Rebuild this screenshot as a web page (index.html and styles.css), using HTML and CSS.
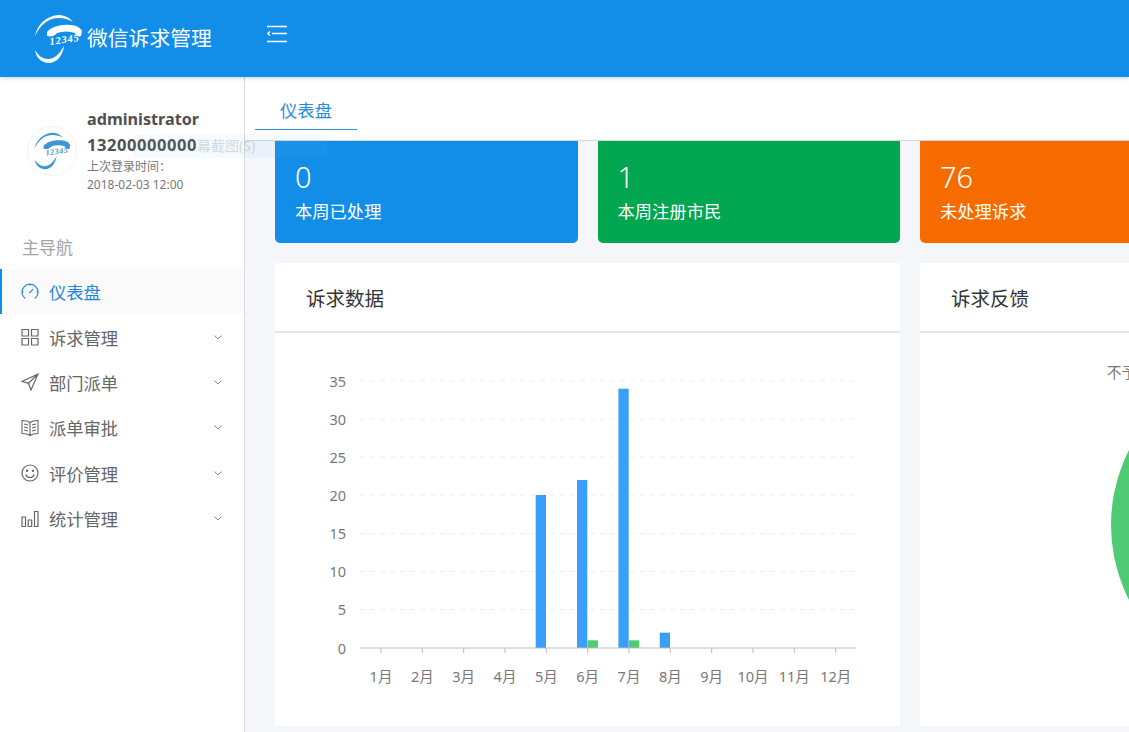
FILE: index.html
```html
<!DOCTYPE html>
<html lang="zh-CN">
<head>
    <meta charset="UTF-8">
    <meta name="viewport" content="width=device-width, initial-scale=1.0">
    <title>微信诉求管理</title>
    <link rel="stylesheet" href="styles.css">
</head>
<body>
    <svg class="defs" width="0" height="0">
        <symbol id="logo" viewBox="0 0 50 50">
            <path fill="currentColor" d="M2 22C4 11 13 2 25 1c6 0 11 2 15 7 -5-3-9-4-14-4C15 4 7 11 2 22z"/>
            <path fill="currentColor" d="M14 18c4-5 14-8 23-7 5 0 10 2 12 6l-1 5c-3 1-5 0-6-3 -6-2-12-2-18 0 -2 3-6 4-10 3z"/>
            <path fill="currentColor" d="M2 36c3 5 7 9 13 9 7 0 12-6 16-13 -1 9-7 17-15 17C9 49 3 44 2 36z"/>
            <text x="17" y="31" class="logo-num" transform="rotate(-8 17 31)">12345</text>
        </symbol>
    </svg>

    <header class="topbar">
        <div class="brand">
            <svg class="brand-logo"><use href="#logo"/></svg>
            <span class="brand-name">微信诉求管理</span>
        </div>
        <svg class="menu-toggle" width="20" height="18" viewBox="0 0 20 18" fill="none" stroke="#fff" stroke-width="1.4">
            <path d="M0 1.5h20M5 8.5h15M0 16.5h20M3 6.5L.8 8.5 3 10.5"/>
        </svg>
    </header>

    <div class="layout">
        <aside class="sidebar">
            <div class="user">
                <div class="avatar"><svg class="avatar-logo"><use href="#logo"/></svg></div>
                <div class="user-info">
                    <div class="user-name">administrator</div>
                    <div class="user-name user-phone">13200000000</div>
                    <div class="user-meta user-meta-first">上次登录时间：</div>
                    <div class="user-meta">2018-02-03 12:00</div>
                </div>
            </div>

            <div class="nav-title">主导航</div>
            <nav class="nav">
                <a class="nav-item active">
                    <svg class="nav-icon" viewBox="0 0 18 18" fill="none" stroke="currentColor" stroke-width="1.2"><path d="M4.2 15.6A8 8 0 1 1 13.8 15.6M1 9h1.5M15.5 9H17M9 1v1.5M8.4 10.2L12 6.2"/></svg>
                    <span>仪表盘</span>
                </a>
                <a class="nav-item">
                    <svg class="nav-icon" viewBox="0 0 18 18" fill="none" stroke="currentColor" stroke-width="1.2"><path d="M1 1.5h6.5V8H1zM10.500 1.500H17V8h-6.500zM1 10.500h6.500V17H1zM10.500 10.500H17V17h-6.500z"/></svg>
                    <span>诉求管理</span>
                    <svg class="nav-arrow" viewBox="0 0 8 5" fill="none" stroke="currentColor"><path d="M.5.500L4 4 7.500.500"/></svg>
                </a>
                <a class="nav-item">
                    <svg class="nav-icon" viewBox="0 0 18 18" fill="none" stroke="currentColor" stroke-width="1.2"><path d="M17 1L1 8.500l6.500 1.800L10 17zM17 1L7.500 10.300"/></svg>
                    <span>部门派单</span>
                    <svg class="nav-arrow" viewBox="0 0 8 5" fill="none" stroke="currentColor"><path d="M.5.500L4 4 7.500.500"/></svg>
                </a>
                <a class="nav-item">
                    <svg class="nav-icon" viewBox="0 0 18 18" fill="none" stroke="currentColor" stroke-width="1.1"><path d="M1 1.500c3 0 6 .5 8 2 2-1.500 5-2 8-2v13c-3 0-6 .5-8 2-2-1.500-5-2-8-2zM9 3.500v13M3 5l4 1M3 8l4 1M3 11l4 1M15 5l-4 1M15 8l-4 1M15 11l-4 1"/></svg>
                    <span>派单审批</span>
                    <svg class="nav-arrow" viewBox="0 0 8 5" fill="none" stroke="currentColor"><path d="M.5.500L4 4 7.500.500"/></svg>
                </a>
                <a class="nav-item">
                    <svg class="nav-icon" viewBox="0 0 18 18" fill="none" stroke="currentColor" stroke-width="1.2"><circle cx="9" cy="9" r="8"/><path d="M4.800 10.500c1 4 7.400 4 8.400 0"/><circle cx="6" cy="6.800" r=".6"/><circle cx="12" cy="6.800" r=".6"/></svg>
                    <span>评价管理</span>
                    <svg class="nav-arrow" viewBox="0 0 8 5" fill="none" stroke="currentColor"><path d="M.5.500L4 4 7.500.500"/></svg>
                </a>
                <a class="nav-item">
                    <svg class="nav-icon" viewBox="0 0 18 18" fill="none" stroke="currentColor" stroke-width="1.2"><path d="M1 7h3.500v9.500H1zM7.200 10h3.500v6.500H7.200zM13.500 1.500H17v15h-3.500z"/></svg>
                    <span>统计管理</span>
                    <svg class="nav-arrow" viewBox="0 0 8 5" fill="none" stroke="currentColor"><path d="M.5.500L4 4 7.500.500"/></svg>
                </a>
            </nav>
        </aside>

        <main class="content">
            <div class="tabs">
                <a class="tab">仪表盘</a>
            </div>

            <div class="dashboard">
                <div class="stat stat-blue">
                    <div class="stat-num">0</div>
                    <div class="stat-label">本周已处理</div>
                </div>
                <div class="stat stat-green">
                    <div class="stat-num">1</div>
                    <div class="stat-label">本周注册市民</div>
                </div>
                <div class="stat stat-orange">
                    <div class="stat-num">76</div>
                    <div class="stat-label">未处理诉求</div>
                </div>

                <section class="panel panel-wide">
                    <h2 class="panel-title">诉求数据</h2>
                    <svg class="chart" width="625" height="393" viewBox="275 333 625 393">
                        <g class="grid">
                            <path d="M360 381H856M360 419H856M360 457H856M360 495H856M360 533.500H856M360 571.500H856M360 609.500H856"/>
                        </g>
                        <g class="y-labels">
                            <text x="346" y="387">35</text>
                            <text x="346" y="425">30</text>
                            <text x="346" y="463">25</text>
                            <text x="346" y="501">20</text>
                            <text x="346" y="539">15</text>
                            <text x="346" y="577">10</text>
                            <text x="346" y="615">5</text>
                            <text x="346" y="654">0</text>
                        </g>
                        <g class="bars-blue">
                            <rect x="535.700" y="495" width="10.300" height="153"/>
                            <rect x="577" y="480" width="10.300" height="168"/>
                            <rect x="618.400" y="388.700" width="10.300" height="259.300"/>
                            <rect x="659.700" y="632.700" width="10.300" height="15.300"/>
                        </g>
                        <g class="bars-green">
                            <rect x="587.600" y="640.300" width="10.300" height="7.700"/>
                            <rect x="629" y="640.300" width="10.300" height="7.700"/>
                        </g>
                        <path class="axis" d="M360 648H856M381 648v5M422.300 648v5M463.700 648v5M505 648v5M546.300 648v5M587.700 648v5M629 648v5M670.300 648v5M711.700 648v5M753 648v5M794.300 648v5M835.700 648v5"/>
                        <g class="x-labels">
                            <text x="381" y="682">1月</text>
                            <text x="422.300" y="682">2月</text>
                            <text x="463.700" y="682">3月</text>
                            <text x="505" y="682">4月</text>
                            <text x="546.300" y="682">5月</text>
                            <text x="587.700" y="682">6月</text>
                            <text x="629" y="682">7月</text>
                            <text x="670.300" y="682">8月</text>
                            <text x="711.700" y="682">9月</text>
                            <text x="753" y="682">10月</text>
                            <text x="794.300" y="682">11月</text>
                            <text x="835.700" y="682">12月</text>
                        </g>
                    </svg>
                </section>

                <section class="panel">
                    <h2 class="panel-title">诉求反馈</h2>
                    <div class="pie-box">
                        <div class="pie-legend">不予受理</div>
                        <div class="pie"></div>
                    </div>
                </section>
            </div>
        </main>
    </div>

    <div class="ghost-tip">幕截图(S)</div>
</body>
</html>
```

FILE: styles.css
```css
* {
	box-sizing: border-box;
}

html, body {
	height: 732px;
	overflow: hidden;
}

body {
	margin: 0;
	background: #f5f6fa;
	font-family: "Noto Sans", "Noto Sans CJK SC", sans-serif;
	color: #555;
}

.defs {
	display: block;
	height: 0;
}

.logo-num {
	font-family: "Liberation Serif", serif;
	font-style: italic;
	font-weight: 700;
	font-size: 10.5px;
	letter-spacing: .8px;
	fill: currentColor;
}

.topbar {
	height: 77px;
	background: #128ee9;
	display: flex;
	align-items: flex-start;
	box-shadow: 0 1px 4px rgba(0, 0, 0, 0.2);
	position: relative;
	z-index: 2;
}

.brand {
	width: 267px;
	padding: 14px 0 0 33px;
	display: flex;
	color: #fff;
}

.brand-logo {
	width: 50px;
	height: 50px;
	flex: none;
}

.brand-name {
	margin: 6px 0 0 4px;
	font-size: 20.8px;
	line-height: 36px;
	white-space: nowrap;
}

.menu-toggle {
	margin-top: 25px;
}

.layout {
	display: flex;
	height: 655px;
}

.sidebar {
	width: 245px;
	flex: none;
	background: #fff;
	border-right: 1px solid #d9d9d9;
}

.user {
	display: flex;
	align-items: center;
	padding: 30px 0 0 27px;
}

.avatar {
	width: 50px;
	height: 50px;
	flex: none;
	border-radius: 50%;
	border: 1px solid #f2f2f2;
	color: #3d97d3;
	padding: 5px;
}

.avatar-logo {
	display: block;
	width: 38px;
	height: 38px;
}

.user-info {
	margin-left: 10px;
}

.user-name {
	font-size: 16.2px;
	font-weight: 700;
	line-height: 25px;
	color: #505050;
}

.user-phone {
	font-size: 16.5px;
	letter-spacing: .55px;
}

.user-meta {
	font-size: 12px;
	line-height: 18px;
	color: #777;
}

.user-meta-first {
	margin-top: 1px;
}

.nav-title {
	margin-top: 41px;
	padding-left: 22px;
	font-size: 17px;
	line-height: 26px;
	color: #a3a3a3;
}

.nav {
	margin-top: 8px;
}

.nav-item {
	height: 45.4px;
	display: flex;
	align-items: center;
	padding-left: 21px;
	font-size: 17.3px;
	color: #666;
	position: relative;
}

.nav-item.active {
	background: #fafafa;
	color: #1f86dc;
}

.nav-item.active::before {
	content: "";
	position: absolute;
	left: 0;
	top: 0;
	bottom: 0;
	width: 2px;
	background: #128ee9;
}

.nav-icon {
	width: 18px;
	height: 18px;
	flex: none;
	margin-right: 10px;
}

.nav-arrow {
	width: 8px;
	height: 5px;
	margin-left: auto;
	margin-right: 22px;
	color: #888;
}

.content {
	flex: 1;
	min-width: 0;
}

.tabs {
	height: 64px;
	background: #fff;
	border-bottom: 1px solid #d8d8d8;
	padding: 10px 0 0 10px;
}

.tab {
	display: block;
	width: 102px;
	height: 43px;
	line-height: 47px;
	text-align: center;
	font-size: 17.3px;
	color: #2a8bd6;
	border-bottom: 1px solid #2f8fdc;
}

.dashboard {
	display: grid;
	grid-template-columns: 302.5px 302.5px 303px;
	gap: 20px;
	padding-left: 30px;
	width: 1000px;
}

.stat {
	height: 102px;
	border-radius: 0 0 5px 5px;
	padding: 17px 20px 0;
	color: #fff;
}

.stat-blue {
	background: #128ee9;
}

.stat-green {
	background: #00a650;
}

.stat-orange {
	background: #f66b00;
}

.stat-num {
	font-size: 29px;
	font-weight: 300;
	line-height: 38px;
}

.stat-label {
	font-size: 17.3px;
	line-height: 31px;
}

.panel {
	height: 463px;
	background: #fff;
}

.panel-wide {
	grid-column: span 2;
}

.panel-title {
	margin: 0;
	height: 70px;
	padding-left: 31px;
	font-size: 19.500px;
	font-weight: 400;
	line-height: 72px;
	color: #333;
	border-bottom: 2px solid #e6e6e6;
}

.chart {
	display: block;
	font-size: 14.500px;
}

.grid path {
	fill: none;
	stroke: #eee;
	stroke-dasharray: 5 5;
}

.axis {
	fill: none;
	stroke: #bbb;
}

.bars-blue {
	fill: #3a9ffb;
}

.bars-green {
	fill: #4fcb74;
}

.y-labels text {
	fill: #777;
	text-anchor: end;
}

.x-labels text {
	fill: #777;
	text-anchor: middle;
}

.pie-box {
	padding-top: 29px;
	position: relative;
}

.pie-legend {
	margin-left: 187px;
	font-size: 14.500px;
	line-height: 20px;
	color: #777;
	white-space: nowrap;
}

.pie {
	position: absolute;
	left: 191px;
	top: 27px;
	width: 330px;
	height: 330px;
	border-radius: 50%;
	background: #4fcb74;
}

.ghost-tip {
	position: absolute;
	left: 133px;
	top: 135px;
	width: 194px;
	height: 23px;
	padding-left: 64px;
	font-size: 14px;
	line-height: 21px;
	color: rgba(120, 130, 140, 0.3);
	background: rgba(120, 180, 240, 0.07);
	z-index: 3;
}
```
